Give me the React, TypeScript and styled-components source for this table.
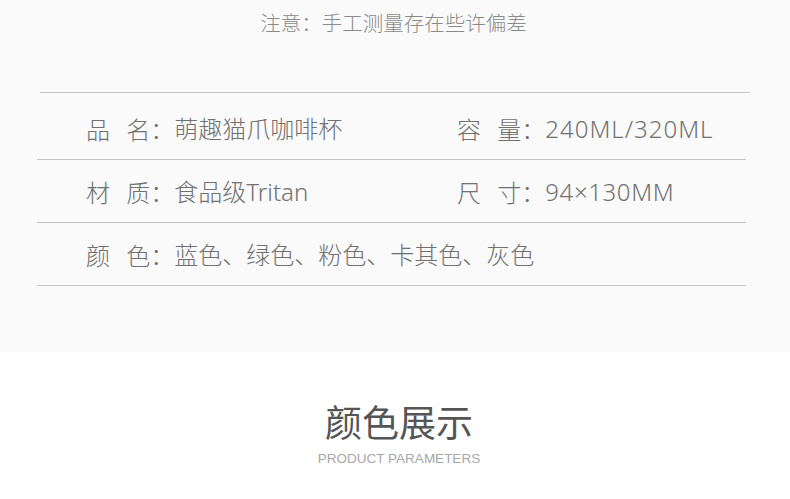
import React from "react";
import styled, { createGlobalStyle } from "styled-components";

const Global = createGlobalStyle`
  html, body { margin: 0; padding: 0; background: #ffffff; }
  body { font-family: "Noto Sans CJK SC", "Noto Sans", sans-serif; }
`;

const Page = styled.div`
  width: 790px;
  height: 499px;
  overflow: hidden;
  background: #ffffff;
`;

const SpecSection = styled.section`
  height: 352px;
  background: #fafafa;
  box-sizing: border-box;
  padding-top: 8px;
  display: flex;
  flex-direction: column;
`;

const Note = styled.div`
  text-align: center;
  font-size: 20.5px;
  line-height: 28px;
  color: #8a8a8a;
  font-weight: 300;
  padding-right: 3px;
`;

const TopRule = styled.div`
  margin: 56px 40px 0 40px;
  height: 1px;
  background: #c4c4c4;
`;

const Table = styled.div`
  margin: 0 44px 0 37px;
  display: flex;
  flex-direction: column;
`;

const Row = styled.div<{ $first?: boolean }>`
  display: grid;
  grid-template-columns: 371px 1fr;
  align-items: center;
  height: ${(p) => (p.$first ? 67 : 63)}px;
  padding-top: ${(p) => (p.$first ? 6 : 2)}px;
  padding-left: 49px;
  box-sizing: border-box;
  border-bottom: 1px solid #c4c4c4;
`;

const Cell = styled.div`
  display: flex;
  align-items: center;
  font-size: 24px;
  line-height: 32px;
  color: #707070;
  font-weight: 300;
  white-space: pre;
`;

const Label = styled.span`
  word-spacing: 11px;
`;

const Value = styled.span<{ $tracking?: number }>`
  font-family: "Noto Sans", "Noto Sans CJK SC", sans-serif;
  letter-spacing: ${(p) => p.$tracking ?? 0}px;
`;

const Showcase = styled.section`
  display: flex;
  flex-direction: column;
  align-items: center;
  padding-top: 44px;
  padding-left: 8px;
`;

const Title = styled.h2`
  margin: 0;
  font-size: 37px;
  line-height: 50px;
  font-weight: 400;
  color: #555555;
`;

const Subtitle = styled.div`
  margin-top: 4px;
  font-family: "Liberation Sans", Arial, sans-serif;
  font-size: 13.5px;
  line-height: 18px;
  color: #a8a8a8;
`;

type Spec = { label: string; value: string; tracking?: number };

const rows: Spec[][] = [
  [
    { label: "品 名：", value: "萌趣猫爪咖啡杯" },
    { label: "容 量：", value: "240ML/320ML", tracking: 1 },
  ],
  [
    { label: "材 质：", value: "食品级Tritan" },
    { label: "尺 寸：", value: "94×130MM", tracking: 0.6 },
  ],
  [{ label: "颜 色：", value: "蓝色、绿色、粉色、卡其色、灰色" }],
];

export default function App() {
  return (
    <Page>
      <Global />
      <SpecSection>
        <Note>注意：手工测量存在些许偏差</Note>
        <TopRule />
        <Table>
          {rows.map((r, i) => (
            <Row key={i} $first={i === 0}>
              {r.map((c) => (
                <Cell key={c.label}>
                  <Label>{c.label}</Label>
                  <Value $tracking={c.tracking}>{c.value}</Value>
                </Cell>
              ))}
            </Row>
          ))}
        </Table>
      </SpecSection>
      <Showcase>
        <Title>颜色展示</Title>
        <Subtitle>PRODUCT PARAMETERS</Subtitle>
      </Showcase>
    </Page>
  );
}
